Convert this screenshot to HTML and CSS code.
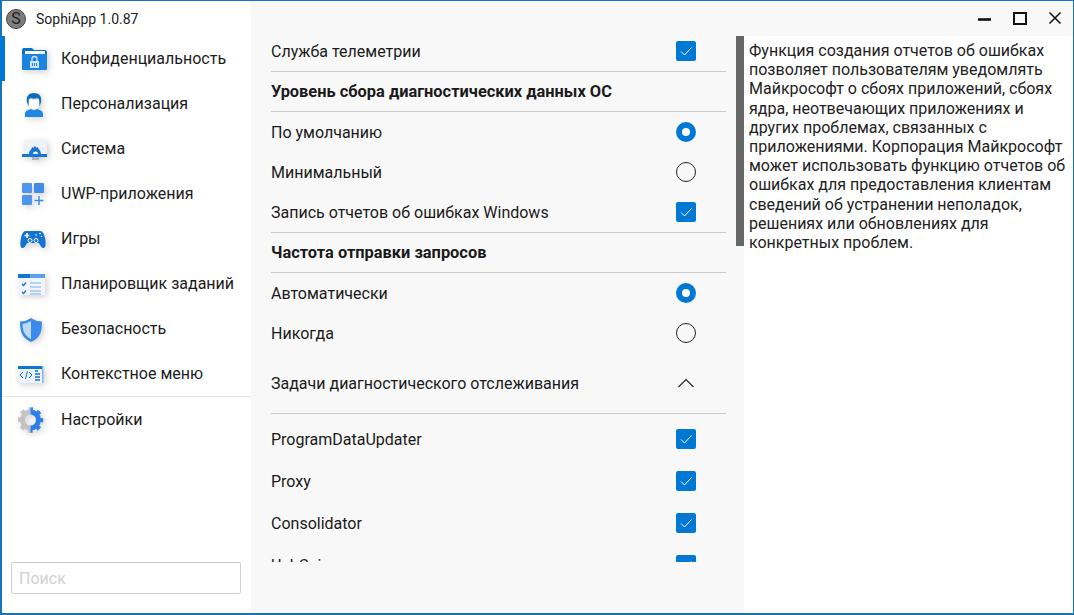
FILE: index.html
```html
<!DOCTYPE html>
<html lang="ru">
<head>
<meta charset="utf-8">
<title>SophiApp 1.0.87</title>
<link rel="stylesheet" href="styles.css">
</head>
<body>
<div class="window">
  <aside class="sidebar">
    <div class="brand">
      <span class="logo">S</span>
      <span class="brand-name">SophiApp 1.0.87</span>
    </div>
    <nav class="nav">
      <a class="nav-item active">
        <svg class="nav-icon" viewBox="0 0 32 32"><path d="M4 7a2 2 0 0 1 2-2h8l2 2h11a2 2 0 0 1 2 2v3H4z" fill="#0a6fc9"/><path d="M7 8h20v3H7z" fill="#fff"/><path d="M4 11h25v15a1 1 0 0 1-1 1H5a1 1 0 0 1-1-1z" fill="#1a84e0"/><rect x="12" y="18" width="9" height="7" fill="#cfe4f8"/><path d="M14 18v-2a2.500 2.500 0 0 1 5 0v2" fill="none" stroke="#cfe4f8" stroke-width="1.300"/><path d="M14.500 20v3M16.500 20v3M18.500 20v3" stroke="#1a84e0"/></svg>
        <span>Конфиденциальность</span>
      </a>
      <a class="nav-item">
        <svg class="nav-icon" viewBox="0 0 32 32"><path d="M9 14c-1-6 2-9 7-9s8 3 7 9c-.5 2-1 3-1.500 4-.2-4-.5-7-2-8-2 1-5 1-7 0-1.500 1-1.800 4-2 8-.5-1-1-2-1.500-4z" fill="#0b6cc0"/><path d="M11 11c2 1 8 1 10 0 1 5-1 10-5 10s-6-5-5-10z" fill="#fff"/><path d="M7 29v-3c0-3 3-4 6-5 1.500 1.500 4.500 1.500 6 0 3 1 6 2 6 5v3z" fill="#1f87e3"/></svg>
        <span>Персонализация</span>
      </a>
      <a class="nav-item">
        <svg class="nav-icon" viewBox="0 0 32 32"><path d="M6 7h23v17H6z" fill="#eef2f6"/><path d="M4 21h7c.3-3 1.300-4 2.500-5l.5-2 1.500.8 1.500-1.800 1.500 1.800 1.500-.8.500 2c1.200 1 2.200 2 2.500 5h6v3H4z" fill="#1478d4"/><path d="M15 21a2.500 2.500 0 0 1 5 0z" fill="#fff"/><path d="M14 24h7v3h-7z" fill="#b5b5b5"/></svg>
        <span>Система</span>
      </a>
      <a class="nav-item">
        <svg class="nav-icon" viewBox="0 0 32 32"><rect x="4" y="5" width="10" height="10" rx="1" fill="#4e95ef"/><rect x="16" y="5" width="10" height="10" rx="1" fill="#3f8bea"/><rect x="4" y="17" width="10" height="10" rx="1" fill="#4e95ef"/><path d="M21 18v9M16.500 22.500h9" stroke="#3f8bea" stroke-width="1.500"/></svg>
        <span>UWP-приложения</span>
      </a>
      <a class="nav-item">
        <svg class="nav-icon" viewBox="0 0 32 32"><path d="M8 8h14c3 0 4 3 5 7 1 5 1 9-1 10-2 .5-3-1-5-5H9c-2 4-3 5.500-5 5-2-1-2-5-1-10 1-4 2-7 5-7z" fill="#1273d2"/><path d="M6.500 12.500h5M9 10v5" stroke="#fff" stroke-width="1.500"/><circle cx="12" cy="17.500" r="2" fill="none" stroke="#fff"/><circle cx="18" cy="17.500" r="2" fill="none" stroke="#fff"/><circle cx="18" cy="12" r=".8" fill="#fff"/><circle cx="22" cy="10.500" r=".8" fill="#fff"/><circle cx="23.500" cy="13.500" r=".8" fill="#fff"/></svg>
        <span>Игры</span>
      </a>
      <a class="nav-item">
        <svg class="nav-icon" viewBox="0 0 32 32"><path d="M0 6h27v21H0z" fill="#f1f5f9"/><path d="M0 6h27v4H0z" fill="#5ba2ed"/><path d="M0 6h12v4H0z" fill="#1273d2"/><path d="M4 16l1.500 1.500L8 14.500M4 24l1.500 1.500L8 22.500" fill="none" stroke="#1273d2" stroke-width="1.200"/><path d="M12 15h11M12 19h11M12 23h11M12 26h11" stroke="#78aff0" stroke-width="1.200"/></svg>
        <span>Планировщик заданий</span>
      </a>
      <a class="nav-item">
        <svg class="nav-icon" viewBox="0 0 32 32"><path d="M13 5c3.500 2.500 7 3.500 11 3.500 0 9-1 16-11 20.500C3 24.500 2 17.500 2 8.500 6 8.500 9.500 7.500 13 5z" fill="#3a8bec"/><path d="M13 8c-2.500 1.500-5.500 2.500-8.500 3 .2 6 1 11 8.500 15z" fill="#bcd9f8"/></svg>
        <span>Безопасность</span>
      </a>
      <a class="nav-item">
        <svg class="nav-icon" viewBox="0 0 32 32"><path d="M0 8h24v17H0z" fill="#edf3fa"/><path d="M0 8h24v3H0z" fill="#1273d2"/><path d="M24 8h1.500v17H24z" fill="#8bb8ec"/><path d="M5 14l-3 3 3 3M11 14l3 3-3 3M9.500 13l-2 8" fill="none" stroke="#1273d2" stroke-width="1"/><path d="M17 13h3M17 16h5M17 19h5M17 22h5" stroke="#1273d2" stroke-width="1.300"/></svg>
        <span>Контекстное меню</span>
      </a>
      <a class="nav-item settings">
        <svg class="nav-icon" viewBox="0 0 32 32">
          <clipPath id="gear-left"><rect x="0" y="0" width="12.500" height="32"/></clipPath>
          <clipPath id="gear-right"><rect x="12.500" y="0" width="20" height="32"/></clipPath>
          <g class="gear-gray" clip-path="url(#gear-left)"><circle cx="12.500" cy="16" r="8" class="gear-ring"/><circle cx="12.500" cy="16" r="11" class="gear-teeth"/></g>
          <g class="gear-blue" clip-path="url(#gear-right)"><circle cx="12.500" cy="16" r="8" class="gear-ring"/><circle cx="12.500" cy="16" r="11" class="gear-teeth"/></g>
        </svg>
        <span>Настройки</span>
      </a>
    </nav>
    <div class="search">
      <input class="search-input" type="text" placeholder="Поиск">
    </div>
  </aside>

  <main class="content">
    <div class="titlebar">
      <span class="win-btn"><svg viewBox="0 0 14 14"><path d="M0 8.500h13" stroke="#111" stroke-width="2.600"/></svg></span>
      <span class="win-btn"><svg viewBox="0 0 14 14"><path d="M1 2h12v11H1z" fill="none" stroke="#111" stroke-width="2"/></svg></span>
      <span class="win-btn"><svg viewBox="0 0 14 14"><path d="M1.500 1.500l11 11M12.500 1.500l-11 11" stroke="#111" stroke-width="1.500"/></svg></span>
    </div>
    <div class="panes">
      <section class="settings-pane">
        <div class="settings-list">
          <div class="row row-first line"><span>Служба телеметрии</span><span class="check"><svg viewBox="0 0 20 20"><path d="M5 10.500l3.500 3.500 7-7.500" fill="none" stroke="#fff"/></svg></span></div>
          <div class="row head line">Уровень сбора диагностических данных ОС</div>
          <div class="row"><span>По умолчанию</span><span class="radio on"></span></div>
          <div class="row"><span>Минимальный</span><span class="radio"></span></div>
          <div class="row row-last line"><span>Запись отчетов об ошибках Windows</span><span class="check"><svg viewBox="0 0 20 20"><path d="M5 10.500l3.500 3.500 7-7.500" fill="none" stroke="#fff"/></svg></span></div>
          <div class="row head line">Частота отправки запросов</div>
          <div class="row"><span>Автоматически</span><span class="radio on"></span></div>
          <div class="row"><span>Никогда</span><span class="radio"></span></div>
          <div class="row expander line"><span>Задачи диагностического отслеживания</span><svg class="chevron" viewBox="0 0 20 20"><path d="M2.500 14L10 6.500 17.500 14" fill="none" stroke="#222" stroke-width="1.100"/></svg></div>
          <div class="tasks">
            <div class="row task"><span>ProgramDataUpdater</span><span class="check"><svg viewBox="0 0 20 20"><path d="M5 10.500l3.500 3.500 7-7.500" fill="none" stroke="#fff"/></svg></span></div>
            <div class="row task"><span>Proxy</span><span class="check"><svg viewBox="0 0 20 20"><path d="M5 10.500l3.500 3.500 7-7.500" fill="none" stroke="#fff"/></svg></span></div>
            <div class="row task"><span>Consolidator</span><span class="check"><svg viewBox="0 0 20 20"><path d="M5 10.500l3.500 3.500 7-7.500" fill="none" stroke="#fff"/></svg></span></div>
            <div class="row task"><span>UsbCeip</span><span class="check"><svg viewBox="0 0 20 20"><path d="M5 10.500l3.500 3.500 7-7.500" fill="none" stroke="#fff"/></svg></span></div>
          </div>
        </div>
      </section>
      <section class="desc-pane">
        <p class="desc">Функция создания отчетов об ошибках позволяет пользователям уведомлять Майкрософт о сбоях приложений, сбоях ядра, неотвечающих приложениях и других проблемах, связанных с приложениями. Корпорация Майкрософт может использовать функцию отчетов об ошибках для предоставления клиентам сведений об устранении неполадок, решениях или обновлениях для конкретных проблем.</p>
      </section>
    </div>
  </main>
</div>
</body>
</html>
```

FILE: styles.css
```css
* { box-sizing: border-box; }
html, body { margin: 0; height: 100%; overflow: hidden; }
body { font-family: Roboto, "Liberation Sans", sans-serif; color: #1a1a1a; font-size: 16px; }

.window {
  display: grid;
  grid-template-columns: 249px minmax(0, 1fr);
  width: 1074px;
  height: 615px;
  border-style: solid;
  border-color: #1774bb;
  border-width: 1px 1px 2px 2px;
  background: #fff;
}

.sidebar { display: flex; flex-direction: column; background: #fff; min-height: 0; }
.brand { display: flex; align-items: center; height: 35px; padding-left: 4px; gap: 10px; }
.logo {
  width: 20px; height: 20px; border-radius: 50%;
  background: #7d7d7d; border: 1px solid #444; color: #222;
  display: flex; align-items: center; justify-content: center;
  font-size: 16px; line-height: 1;
}
.brand-name { font-size: 14px; color: #222; }

.nav { display: flex; flex-direction: column; }
.nav-item {
  display: flex; align-items: center; gap: 11px;
  height: 45px; padding-left: 16px;
  font-size: 16px; color: #1c1c1c;
}
.nav-item.active { box-shadow: inset 5px 0 0 #0078d4; margin-left: -2px; padding-left: 18px; }
.nav-item.settings { border-top: 1px solid #e4e4e4; height: 46px; }
.nav-icon { width: 32px; height: 32px; flex: none; filter: drop-shadow(2px 2px 3px rgba(0, 0, 0, .18)); }

.gear-ring { fill: none; stroke-width: 5; }
.gear-teeth { fill: none; stroke-width: 3.500; stroke-dasharray: 4.320 4.320; stroke-dashoffset: 2.160; }
.gear-gray .gear-ring, .gear-gray .gear-teeth { stroke: #c4c4c4; }
.gear-blue .gear-ring, .gear-blue .gear-teeth { stroke: #2a80e8; }

.search { margin-top: auto; padding: 0 9px 19px; }
.search-input {
  display: block; width: 230px; height: 32px;
  border: 1px solid #cfcfcf; border-radius: 2px;
  padding: 0 7px; background: #fff; outline: none;
  font: 16px Roboto, sans-serif;
}
.search-input::placeholder { color: #d0d0d0; opacity: 1; }

.content { display: flex; flex-direction: column; min-height: 0; background: #f8f8f8; }
.titlebar { display: flex; justify-content: flex-end; height: 35px; flex: none; padding: 10px 11px 0 0; gap: 21px; }
.win-btn { width: 14px; height: 14px; }
.win-btn svg { display: block; width: 14px; height: 14px; }

.panes { display: grid; grid-template-columns: 493px minmax(0, 1fr); flex: 1; min-height: 0; }
.settings-pane { padding: 0 18px 51px 20px; min-height: 0; }
.settings-list { height: 100%; overflow: hidden; }
.row { display: flex; align-items: center; justify-content: space-between; height: 40px; padding: 0 30px 0 0; font-size: 16px; }
.row.line { border-bottom: 1px solid #c9c9c9; }
.row-first { height: 36px; padding-bottom: 5px; }
.row-last { height: 41px; }
.head { font-weight: 700; font-size: 16.400px; }
.expander { height: 61px; }
.tasks { padding-top: 4px; }
.task { height: 42px; }
.check { width: 20px; height: 20px; background: #0078d4; border-radius: 2px; flex: none; }
.check svg { display: block; width: 20px; height: 20px; }
.radio { width: 20px; height: 20px; border-radius: 50%; border: 1px solid #222; flex: none; }
.radio.on { border: 6px solid #0078d4; background: #fff; }
.chevron { width: 20px; height: 20px; flex: none; }

.desc-pane { background: #fff; min-height: 0; }
.desc {
  margin: 0; padding: 5px 5px 0 5px;
  height: 210px;
  box-shadow: -8px 0 0 #666;
  line-height: 19.200px; color: #222;
}
```
